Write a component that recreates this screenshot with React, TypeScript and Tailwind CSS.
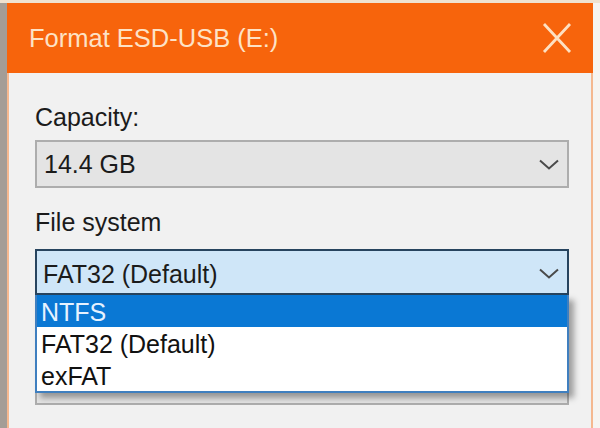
import React from 'react';

const options = ['NTFS', 'FAT32 (Default)', 'exFAT'];

function Chevron() {
  return (
    <svg width="20" height="11" viewBox="0 0 20 11" fill="none">
      <path d="M1 1.5 L10 9.5 L19 1.5" stroke="#4a4a4a" strokeWidth="2" />
    </svg>
  );
}

function CloseIcon() {
  return (
    <svg width="30" height="32" viewBox="0 0 30 32" fill="none">
      <path d="M2 2 L28 30 M28 2 L2 30" stroke="#fde0c2" strokeWidth="2.8" />
    </svg>
  );
}

export default function App() {
  const selected = 0;

  return (
    <div className="w-[600px] h-[428px] overflow-hidden bg-[#efe2d0] font-['Liberation_Sans',Arial,sans-serif]">
      <div className="flex h-full pt-[3px]">
        {/* desktop strip on the left */}
        <div className="w-[7px] bg-[#a49d96]" />

        {/* dialog window */}
        <div className="w-[586px] flex flex-col">
          <div className="h-[70px] bg-[#f7640c] flex items-center justify-between pl-[22px] pr-[21px]">
            <span className="text-[25.5px] leading-[28px] text-[#fde2c6]">Format ESD-USB (E:)</span>
            <CloseIcon />
          </div>

          <div className="flex-1 bg-[#f1f1f1] border-x-2 border-[#f5b88f] pt-[30px] pl-[26px] pr-[22px] text-[25px] text-[#1b1b1b]">
            <div className="h-[28px] leading-[28px]">Capacity:</div>
            <div className="mt-[9px] h-[48px] bg-[#e4e4e4] border-2 border-[#adadad] flex items-center justify-between pl-[7px] pr-[8px]">
              <span className="leading-[28px]">14.4 GB</span>
              <Chevron />
            </div>

            <div className="mt-[20px] h-[28px] leading-[28px]">File system</div>
            <div className="relative mt-[13px]">
              <div className="h-[46px] bg-[#cfe6f8] border-2 border-[#27445f] flex items-center justify-between pl-[6px] pr-[8px] pt-[3px]">
                <span className="leading-[28px]">FAT32 (Default)</span>
                <Chevron />
              </div>

              {/* open dropdown list */}
              <div className="absolute left-0 right-0 top-full z-10 bg-white border-x-2 border-b-2 border-[#3f7fbf] shadow-[5px_5px_6px_rgba(0,0,0,0.35)]">
                {options.map((opt, i) => (
                  <div
                    key={opt}
                    className={
                      i === selected
                        ? 'h-[32px] flex items-center pt-[2px] pl-[4px] bg-[#0a78d4] text-[#e6f2ff]'
                        : 'h-[32px] flex items-center pt-[2px] pl-[4px] text-[#111111]'
                    }
                  >
                    <span className="leading-[28px]">{opt}</span>
                  </div>
                ))}
              </div>
            </div>

            {/* allocation unit row, mostly covered by the list */}
            <div className="mt-[20px] h-[28px]" />
            <div className="mt-[14px] h-[48px] bg-[#e4e4e4] border-2 border-[#adadad] flex items-end pl-[88px] pb-[10px]">
              <span className="w-[3px] h-[4px] rounded-full bg-[#333333]" />
            </div>
          </div>
        </div>

        {/* desktop strip on the right */}
        <div className="flex-1 bg-[#f6f4f1]" />
      </div>
    </div>
  );
}
